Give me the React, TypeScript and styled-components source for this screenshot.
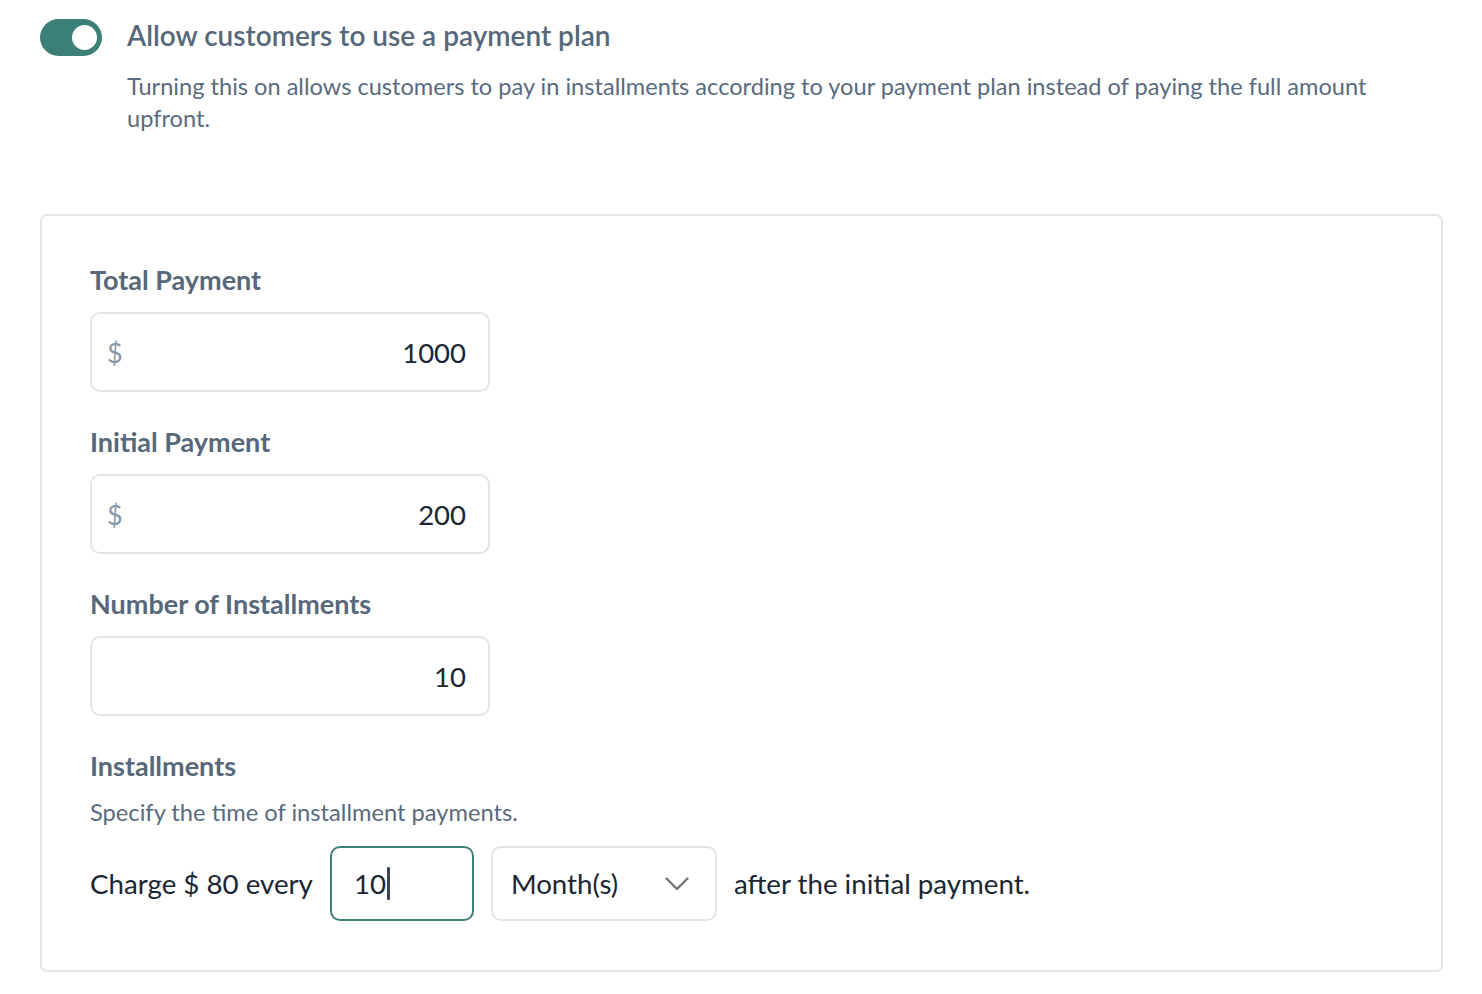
import React from "react";
import styled, { createGlobalStyle } from "styled-components";

const Global = createGlobalStyle`
  html, body { margin: 0; padding: 0; background: #ffffff; }
  body { font-family: Lato, "Open Sans", sans-serif; -webkit-font-smoothing: antialiased; }
  * { box-sizing: border-box; }
`;

const Page = styled.div`
  padding: 19px 39px 0 40px;
  width: 1482px;
`;

const Header = styled.div`
  display: flex;
  align-items: flex-start;
  gap: 25px;
`;

const Toggle = styled.div<{ $on: boolean }>`
  flex: none;
  width: 62px;
  height: 37px;
  border-radius: 19px;
  background: ${(p) => (p.$on ? "#3b7f76" : "#cdd5dd")};
  display: flex;
  align-items: center;
  justify-content: ${(p) => (p.$on ? "flex-end" : "flex-start")};
  padding: 0 5px;
`;

const Knob = styled.div`
  width: 25px;
  height: 25px;
  border-radius: 50%;
  background: #ffffff;
`;

const HeaderText = styled.div`
  display: flex;
  flex-direction: column;
`;

const Title = styled.div`
  font-size: 28px;
  line-height: 32px;
  font-weight: 600;
  color: #55687b;
`;

const Description = styled.p`
  margin: 19px 0 0;
  max-width: 1270px;
  font-size: 23.6px;
  line-height: 32px;
  color: #596b7e;
`;

const Card = styled.div`
  margin-top: 80px;
  border: 2px solid #e2e6eb;
  border-radius: 7px;
  padding: 48px 48px 49px 48px;
  display: flex;
  flex-direction: column;
`;

const Label = styled.div<{ $first?: boolean }>`
  font-size: 27px;
  line-height: 32px;
  font-weight: 700;
  color: #56687a;
  margin-top: ${(p) => (p.$first ? "0" : "34px")};
`;

const AmountBox = styled.div`
  margin-top: 16px;
  width: 400px;
  height: 80px;
  border: 2px solid #e1e5ea;
  border-radius: 10px;
  display: flex;
  align-items: center;
  justify-content: space-between;
  padding: 0 22px 0 15px;
`;

const Prefix = styled.span`
  font-size: 27px;
  color: #8797a8;
`;

const Value = styled.span`
  font-size: 27.5px;
  color: #1b2634;
  margin-left: auto;
`;

const Help = styled.div`
  margin-top: 14px;
  font-size: 23.7px;
  line-height: 32px;
  color: #596b7e;
`;

const ChargeRow = styled.div`
  margin-top: 18px;
  display: flex;
  align-items: center;
  gap: 17px;
  font-size: 27.7px;
  color: #1b2634;
`;

const RowText = styled.span`
  white-space: nowrap;
`;

const FocusInput = styled.div`
  width: 144px;
  height: 75px;
  border: 2px solid #3b7f76;
  border-radius: 10px;
  display: flex;
  align-items: center;
  padding-left: 22px;
  color: #1b2634;
`;

const Caret = styled.span`
  display: inline-block;
  width: 3px;
  height: 33px;
  background: #3a4656;
  margin-left: 1px;
  border-radius: 1px;
`;

const Select = styled.div`
  width: 226px;
  height: 75px;
  border: 2px solid #e1e5ea;
  border-radius: 10px;
  display: flex;
  align-items: center;
  justify-content: space-between;
  padding: 0 26px 0 18px;
  color: #1b2634;
`;

const Chevron = () => (
  <svg width="24" height="14" viewBox="0 0 24 14" fill="none">
    <path d="M1.5 1.5 L12 12 L22.5 1.5" stroke="#757575" strokeWidth="2.4" strokeLinecap="round" strokeLinejoin="round" />
  </svg>
);

export default function App() {
  return (
    <Page>
      <Global />
      <Header>
        <Toggle $on>
          <Knob />
        </Toggle>
        <HeaderText>
          <Title>Allow customers to use a payment plan</Title>
          <Description>
            Turning this on allows customers to pay in installments according to your payment plan instead of paying the full amount upfront.
          </Description>
        </HeaderText>
      </Header>
      <Card>
        <Label $first>Total Payment</Label>
        <AmountBox>
          <Prefix>$</Prefix>
          <Value>1000</Value>
        </AmountBox>
        <Label>Initial Payment</Label>
        <AmountBox>
          <Prefix>$</Prefix>
          <Value>200</Value>
        </AmountBox>
        <Label>Number of Installments</Label>
        <AmountBox>
          <Value>10</Value>
        </AmountBox>
        <Label>Installments</Label>
        <Help>Specify the time of installment payments.</Help>
        <ChargeRow>
          <RowText>Charge $ 80 every</RowText>
          <FocusInput>
            10<Caret />
          </FocusInput>
          <Select>
            <span>Month(s)</span>
            <Chevron />
          </Select>
          <RowText>after the initial payment.</RowText>
        </ChargeRow>
      </Card>
    </Page>
  );
}
